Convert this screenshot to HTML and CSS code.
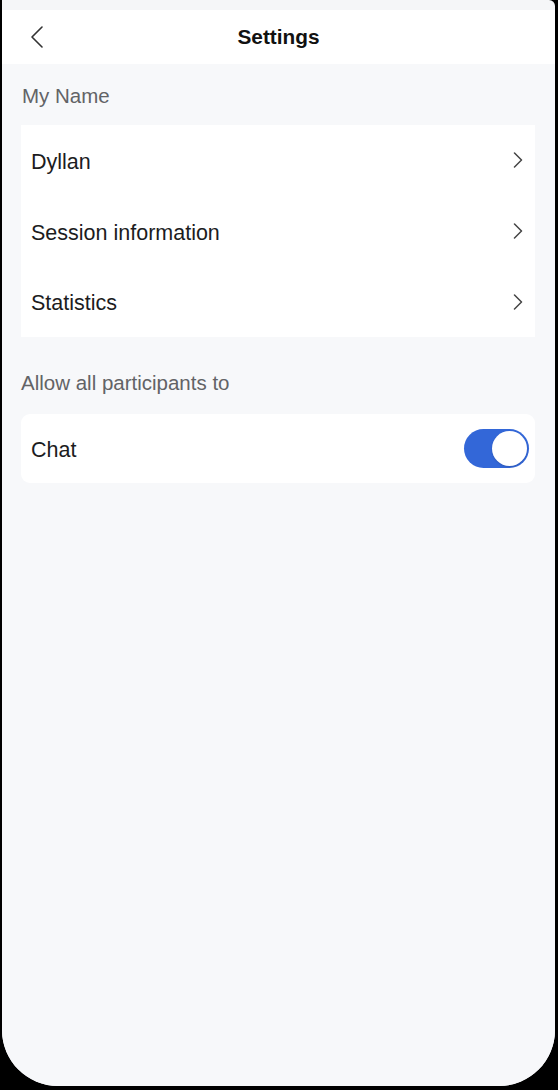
FILE: index.html
```html
<!DOCTYPE html>
<html lang="en">
<head>
    <meta charset="UTF-8">
    <meta name="viewport" content="width=device-width, initial-scale=1.0">
    <title>Settings</title>
    <link rel="stylesheet" href="styles.css">
</head>
<body>
    <div class="screen">
        <div class="status-gap"></div>

        <!-- Top bar -->
        <header class="topbar">
            <button class="back" aria-label="Back">
                <svg width="14" height="22" viewBox="0 0 14 22">
                    <path d="M12 1 L2 11 L12 21" fill="none" stroke="#333" stroke-width="1.6" stroke-linecap="round" stroke-linejoin="round"/>
                </svg>
            </button>
            <h1>Settings</h1>
            <span></span>
        </header>

        <main class="content">
            <p class="section-label first">My Name</p>
            <div class="card">
                <div class="row">
                    <span class="label">Dyllan</span>
                    <svg class="chev" width="10" height="16" viewBox="0 0 10 16"><path d="M1.5 1 L8.5 8 L1.5 15" fill="none" stroke="#444" stroke-width="1.5" stroke-linecap="round" stroke-linejoin="round"/></svg>
                </div>
                <div class="row">
                    <span class="label">Session information</span>
                    <svg class="chev" width="10" height="16" viewBox="0 0 10 16"><path d="M1.5 1 L8.5 8 L1.5 15" fill="none" stroke="#444" stroke-width="1.5" stroke-linecap="round" stroke-linejoin="round"/></svg>
                </div>
                <div class="row">
                    <span class="label">Statistics</span>
                    <svg class="chev" width="10" height="16" viewBox="0 0 10 16"><path d="M1.5 1 L8.5 8 L1.5 15" fill="none" stroke="#444" stroke-width="1.5" stroke-linecap="round" stroke-linejoin="round"/></svg>
                </div>
            </div>

            <p class="section-label">Allow all participants to</p>
            <div class="card rounded">
                <div class="row toggle-row">
                    <span class="label">Chat</span>
                    <div class="switch on"><div class="knob"></div></div>
                </div>
            </div>
        </main>
    </div>
</body>
</html>
```

FILE: styles.css
```css
html, body {
    margin: 0;
    padding: 0;
    background: #000;
}
body {
    font-family: "Liberation Sans", Arial, sans-serif;
    color: #1c1c1e;
}
.screen {
    width: 553px;
    height: 1086px;
    margin-left: 2px;
    background: #f5f6f8;
    border-radius: 0 6px 56px 56px;
    overflow: hidden;
}
.status-gap {
    height: 10px;
}
.topbar {
    height: 54px;
    background: #fff;
    display: grid;
    grid-template-columns: 1fr auto 1fr;
    align-items: center;
    padding: 0 24px;
}
.topbar h1 {
    margin: 0;
    font-size: 20.8px;
    font-weight: bold;
    color: #111;
}
.back {
    background: none;
    border: none;
    padding: 0 0 0 4px;
    width: 20px;
    height: 24px;
    display: flex;
    align-items: center;
    cursor: pointer;
}
.content {
    padding: 0 20px 0 19px;
    background: #f7f8fa;
    height: 1022px;
}
.section-label {
    margin: 0;
    padding: 34px 0 19px;
    line-height: 24px;
    font-size: 20.5px;
    color: #626366;
}
.section-label.first {
    padding: 20px 1px 17px;
}
.card {
    background: #fff;
}
.card.rounded {
    border-radius: 9px;
}
.row {
    height: 70.7px;
    display: flex;
    align-items: center;
    justify-content: space-between;
    padding: 0 12px 0 10px;
    font-size: 21.5px;
    color: #1c1c1e;
}
.row .label {
    padding-top: 4px;
}
.toggle-row {
    height: 69px;
    padding-right: 6px;
}
.switch {
    width: 65px;
    height: 39px;
    border-radius: 20px;
    background: #3367d8;
    position: relative;
}
.switch .knob {
    position: absolute;
    top: 2px;
    right: 2px;
    width: 35px;
    height: 35px;
    border-radius: 50%;
    background: #fff;
    box-shadow: 0 1px 2px rgba(0, 0, 0, 0.15);
}
```
